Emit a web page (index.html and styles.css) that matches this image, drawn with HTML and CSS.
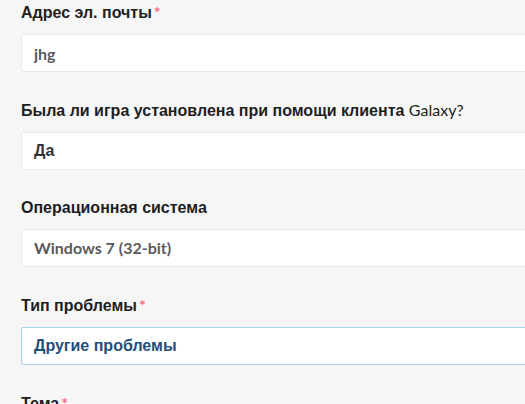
FILE: index.html
```html
<!DOCTYPE html>
<html lang="ru">
<head>
  <meta charset="UTF-8" />
  <meta name="viewport" content="width=device-width, initial-scale=1.0" />
  <title>Форма поддержки</title>
  <link rel="stylesheet" href="styles.css">
</head>
<body>
  <form class="support-form">
    <div class="field">
      <label class="label" for="email">Адрес эл. почты<span class="req">*</span></label>
      <input class="control control-muted" type="text" id="email" value="jhg" />
    </div>
    <div class="field">
      <label class="label" for="galaxy">Была ли игра установлена при помощи клиента <span class="latin">Galaxy?</span></label>
      <div class="control control-dark" id="galaxy">Да</div>
    </div>
    <div class="field">
      <label class="label" for="os">Операционная система</label>
      <div class="control control-muted" id="os">Windows 7 (32-bit)</div>
    </div>
    <div class="field">
      <label class="label" for="problem">Тип проблемы<span class="req">*</span></label>
      <div class="control control-active" id="problem">Другие проблемы</div>
    </div>
    <div class="field">
      <label class="label" for="subject">Тема<span class="req">*</span></label>
      <input class="control" type="text" id="subject" />
    </div>
  </form>
</body>
</html>
```

FILE: styles.css
```css
html, body {
  margin: 0;
  height: 100%;
  overflow: hidden;
}
body {
  background-color: #f6f6f6;
  font-family: "Liberation Sans", Arial, sans-serif;
  color: #222;
  padding-left: 21px;
}
.support-form {
  width: 580px;
}
.field {
  margin-bottom: 26px;
}
.label {
  display: block;
  font-size: 16px;
  font-weight: bold;
  line-height: 24px;
  margin-bottom: 9px;
  color: #1e1e1e;
}
.label .latin {
  font-family: "Lato", sans-serif;
  font-weight: normal;
}
.req {
  color: #f4707f;
  font-family: "Lato", sans-serif;
  margin-left: 2px;
}
.control {
  display: block;
  box-sizing: border-box;
  width: 100%;
  height: 38px;
  line-height: 36px;
  padding: 0 12px;
  margin: 0;
  background: #fff;
  border: 1px solid #e8e8e8;
  border-radius: 2px;
  font-size: 16px;
  font-weight: bold;
  outline: none;
}
.control-muted {
  font-family: "Lato", sans-serif;
  color: #5a5a5a;
}
.control-dark {
  color: #333;
}
.control-active {
  border-color: #a4d5e8;
  color: #1f4f7c;
}
```
